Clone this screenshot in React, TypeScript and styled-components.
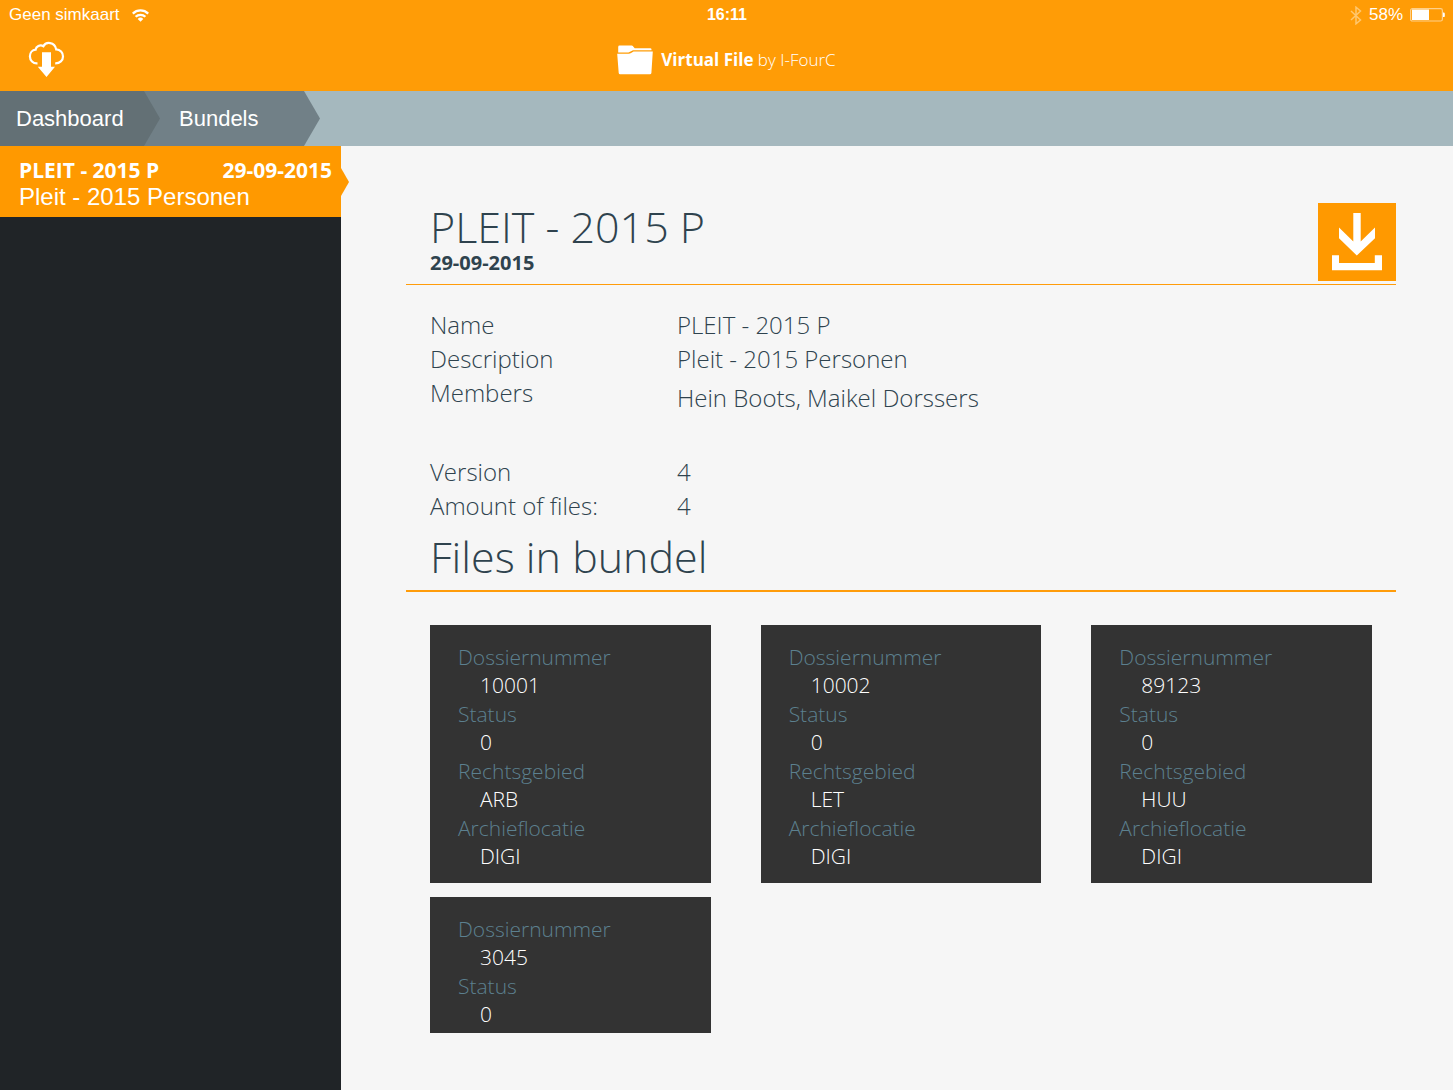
import React from 'react';
import styled, { createGlobalStyle } from 'styled-components';

const orange = '#ff9c06';
const sans = '"Liberation Sans", Arial, sans-serif';
const open = '"Open Sans", sans-serif';

const GlobalStyle = createGlobalStyle`
  *, *::before, *::after { box-sizing: border-box; }
  body { margin: 0; background: #f6f6f6; }
  h1, h2, p, dl, dd, dt, ul, ol { margin: 0; padding: 0; }
  ul, ol { list-style: none; }
  button { border: 0; padding: 0; background: none; cursor: pointer; }
`;

const Screen = styled.div`
  display: flex;
  flex-direction: column;
  height: 100vh;
  font-family: ${open};
  color: #2f434e;
`;

const TopBar = styled.header`
  background: ${orange};
  color: #fff;
`;

const ThreeColumns = styled.div`
  display: grid;
  grid-template-columns: 1fr auto 1fr;
  align-items: center;
`;

const StatusBar = styled(ThreeColumns)`
  height: 30px;
  padding: 0 8px 0 9px;
  font: 17px/30px ${sans};
`;

const StatusGroup = styled.div<{ $end?: boolean }>`
  display: flex;
  align-items: center;
  gap: ${p => (p.$end ? 7 : 12)}px;
  justify-content: ${p => (p.$end ? 'flex-end' : 'flex-start')};
`;

const Clock = styled.time`
  font-size: 16px;
  font-weight: 700;
`;

const TitleBar = styled(ThreeColumns)`
  height: 61px;
  padding: 0 28px 2px;
`;

const IconButton = styled.button`
  display: flex;
  justify-self: start;
  color: inherit;
`;

const Brand = styled.div`
  display: flex;
  align-items: center;
  gap: 8px;
  font-size: 17px;
  font-weight: 300;
  line-height: 24px;

  strong { font-weight: 700; }
`;

const Trail = styled.nav`
  background: #a5b8be;
  height: 55px;
  flex: none;
`;

const TrailList = styled.ol`
  display: flex;
  height: 100%;
`;

const Crumb = styled.li<{ $first?: boolean }>`
  width: ${p => (p.$first ? 160 : 176)}px;
  margin-left: ${p => (p.$first ? 0 : -16)}px;
  padding-left: ${p => (p.$first ? 16 : 35)}px;
  z-index: ${p => (p.$first ? 1 : 0)};
  background: ${p => (p.$first ? '#637075' : '#718087')};
  clip-path: polygon(0 0, calc(100% - 16px) 0, 100% 50%, calc(100% - 16px) 100%, 0 100%);

  a {
    color: #fff;
    text-decoration: none;
    font: 22px/55px ${sans};
  }
`;

const Body = styled.div`
  display: flex;
  flex: 1;
  min-height: 0;
`;

const Sidebar = styled.aside`
  flex: none;
  width: 341px;
  background: #202427;
`;

const BundleItem = styled.button`
  position: relative;
  display: block;
  width: 100%;
  height: 71px;
  padding: 10px 9px 9px 19px;
  background: #ff9900;
  color: #fff;
  text-align: left;

  &::after {
    content: '';
    position: absolute;
    left: 100%;
    top: 22px;
    width: 8px;
    height: 28px;
    background: #ff9900;
    clip-path: polygon(0 0, 100% 50%, 0 100%);
  }
`;

const BundleHead = styled.span`
  display: flex;
  justify-content: space-between;
  font: 700 21px/28px ${open};
`;

const BundleName = styled.span`
  display: block;
  font: 24px/26px ${sans};
`;

const Main = styled.main`
  display: flex;
  flex: 1;
  flex-direction: column;
  min-width: 0;
  padding: 57px 57px 57px 65px;
  background: #f6f6f6;
`;

const SectionHead = styled.div<{ $rule: number }>`
  display: flex;
  align-items: flex-end;
  justify-content: space-between;
  flex: none;
  padding-left: 24px;
  border-bottom: ${p => p.$rule}px solid #ff9c0a;
`;

const HeadText = styled.div`
  padding-bottom: 9px;
`;

const Heading = styled.h2`
  font-size: 43px;
  font-weight: 300;
  line-height: 48px;
`;

const HeadDate = styled.p`
  font-size: 20px;
  font-weight: 700;
  line-height: 24px;
`;

const DownloadButton = styled.button`
  display: flex;
  margin-bottom: 3px;
  background: #ff9900;
  color: #fff;
`;

const Facts = styled.dl`
  flex: none;
  padding: 23px 24px 10px;
  font-size: 24px;
  font-weight: 300;
  line-height: 34px;
`;

const Fact = styled.div<{ $tall?: boolean }>`
  display: grid;
  grid-template-columns: 247px 1fr;
  min-height: ${p => (p.$tall ? 79 : 34)}px;

  dd { padding-top: ${p => (p.$tall ? 5 : 0)}px; }
`;

const FileGrid = styled.ul`
  display: grid;
  grid-template-columns: repeat(3, 1fr);
  gap: 14px 50px;
  align-content: start;
  flex: 1;
  min-height: 0;
  margin: 33px 24px 0;
  overflow: hidden;
`;

const FileCard = styled.li`
  padding: 18px 28px 12px;
  background: #333;
  font-size: 21px;
  font-weight: 300;

  dt { color: #5c808f; line-height: 28px; }
  dd { color: #fff; line-height: 29px; padding-left: 22px; }
`;

const WifiIcon = () => (
  <svg width="17" height="13" viewBox="0 0 17 13" fill="none" stroke="#fff" strokeWidth="2.300" aria-hidden="true">
    <path d="M.8 4.600a11 11 0 0 1 15.400 0M3.600 7.800a7 7 0 0 1 9.800 0" />
    <path d="M8.500 12.800 5.700 9.900a4 4 0 0 1 5.600 0Z" fill="#fff" stroke="none" />
  </svg>
);

const BluetoothIcon = () => (
  <svg width="12" height="19" viewBox="0 0 12 19" fill="none" stroke="#ffc76f" strokeWidth="1.500" aria-hidden="true">
    <path d="M1 5l9.500 9L6 17.800V1.200L10.500 5 1 14" />
  </svg>
);

const BatteryIcon = () => (
  <svg width="35" height="14" viewBox="0 0 35 14" aria-hidden="true">
    <rect x=".6" y=".6" width="31.800" height="12.400" rx="1.800" fill="none" stroke="#ffd08a" strokeWidth="1.200" />
    <rect x="2" y="1.500" width="17" height="10.500" fill="#fff" />
    <path d="M33 4.500h.6a1.200 1.200 0 0 1 1.200 1.200v2.200a1.200 1.200 0 0 1-1.200 1.200H33Z" fill="#fff" />
  </svg>
);

const CloudIcon = () => (
  <svg width="37" height="37" viewBox="0 0 37 37" aria-hidden="true">
    <path
      d="M9.500 22.300C5 22.600 1.900 19.400 1.900 15.300c0-3.800 2.600-6.300 5.700-6.600C8 5.500 12 3.300 15.400 5.200 17.600.5 26.800.4 28.200 8.400c4 .2 6.800 3.300 6.800 7 0 3.900-3.100 7-7.800 6.900"
      fill="none" stroke="#fff" strokeWidth="2.200"
    />
    <path d="M14 11.300h9v14.500h4L18.500 36 9.800 25.800H14Z" fill="#fff" />
  </svg>
);

const FolderIcon = () => (
  <svg width="36" height="30" viewBox="0 0 36 30" fill="#fff" aria-hidden="true">
    <path d="M1.200 7.600V2Q1.200.6 2.600.6h12q1 0 1.600.8l1.500 1.900h15.500q1.300 0 1.300 1.300v.6H16l-4.500 2.400Z" />
    <path d="M.2 8.700h11.300q1.500 0 3-.9l2-1.300h19.300L34.400 28q-.1 1.300-1.500 1.300H3.100q-1.300 0-1.400-1.300Z" />
  </svg>
);

const DownloadIcon = () => (
  <svg width="78" height="78" viewBox="0 0 78 78" fill="#fff" aria-hidden="true">
    <path d="M35.300 10h7.400v28.500L57 24.500v10.800L38.800 52.500 21 35.300V24.500l14.300 14Z" />
    <path d="M14 52.300h7V60h35.800v-7.700h7.200V67.300H14Z" />
  </svg>
);

type FileInfo = [label: string, value: string][];

const makeFile = (nr: string, area: string): FileInfo => [
  ['Dossiernummer', nr],
  ['Status', '0'],
  ['Rechtsgebied', area],
  ['Archieflocatie', 'DIGI'],
];

const files: FileInfo[] = [
  makeFile('10001', 'ARB'),
  makeFile('10002', 'LET'),
  makeFile('89123', 'HUU'),
  makeFile('3045', '').slice(0, 2),
];

const facts = [
  { label: 'Name', value: 'PLEIT - 2015 P' },
  { label: 'Description', value: 'Pleit - 2015 Personen' },
  { label: 'Members', value: 'Hein Boots, Maikel Dorssers', tall: true },
  { label: 'Version', value: '4' },
  { label: 'Amount of files:', value: '4' },
];

export default function App() {
  return (
    <Screen>
      <GlobalStyle />
      <TopBar>
        <StatusBar>
          <StatusGroup>
            <span>Geen simkaart</span>
            <WifiIcon />
          </StatusGroup>
          <Clock>16:11</Clock>
          <StatusGroup $end>
            <BluetoothIcon />
            <span>58%</span>
            <BatteryIcon />
          </StatusGroup>
        </StatusBar>
        <TitleBar>
          <IconButton aria-label="Download from cloud"><CloudIcon /></IconButton>
          <Brand>
            <FolderIcon />
            <span><strong>Virtual File</strong> by I-FourC</span>
          </Brand>
        </TitleBar>
      </TopBar>
      <Trail>
        <TrailList>
          <Crumb $first><a href="#dashboard">Dashboard</a></Crumb>
          <Crumb><a href="#bundels">Bundels</a></Crumb>
        </TrailList>
      </Trail>
      <Body>
        <Sidebar>
          <BundleItem>
            <BundleHead><span>PLEIT - 2015 P</span><span>29-09-2015</span></BundleHead>
            <BundleName>Pleit - 2015 Personen</BundleName>
          </BundleItem>
        </Sidebar>
        <Main>
          <SectionHead $rule={1}>
            <HeadText>
              <Heading as="h1">PLEIT - 2015 P</Heading>
              <HeadDate>29-09-2015</HeadDate>
            </HeadText>
            <DownloadButton aria-label="Download"><DownloadIcon /></DownloadButton>
          </SectionHead>
          <Facts>
            {facts.map(f => (
              <Fact key={f.label} $tall={f.tall}>
                <dt>{f.label}</dt>
                <dd>{f.value}</dd>
              </Fact>
            ))}
          </Facts>
          <SectionHead $rule={2}>
            <HeadText><Heading>Files in bundel</Heading></HeadText>
          </SectionHead>
          <FileGrid>
            {files.map(file => (
              <FileCard key={file[0][1]}>
                <dl>
                  {file.map(([label, value]) => (
                    <React.Fragment key={label}>
                      <dt>{label}</dt>
                      <dd>{value}</dd>
                    </React.Fragment>
                  ))}
                </dl>
              </FileCard>
            ))}
          </FileGrid>
        </Main>
      </Body>
    </Screen>
  );
}
